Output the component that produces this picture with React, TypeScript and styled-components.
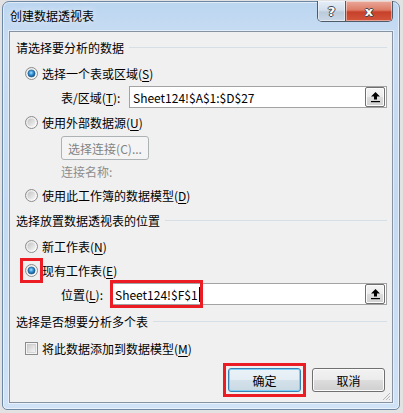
import React, { useId } from "react";
import styled, { createGlobalStyle } from "styled-components";

const Global = createGlobalStyle`
  html, body { margin: 0; padding: 0; }
  body {
    width: 403px; height: 413px; overflow: hidden;
    background: #e2e2e2;
    font-family: "Noto Sans CJK SC", "Microsoft YaHei", sans-serif;
    font-size: 12px; color: #000;
  }
`;

const Page = styled.div`
  padding: 1px 0 0 2px;
`;

const Window = styled.div`
  position: relative;
  width: 398px;
  height: 409px;
  box-sizing: border-box;
  border: 1px solid #6d88a5;
  border-radius: 7px 7px 5px 5px;
  background: linear-gradient(180deg, #bcd6f0 0%, #c9ddf3 10%, #c3daf2 50%, #cfe2f6 100%);
  box-shadow: inset 0 0 0 1px rgba(255, 255, 255, 0.55);
  display: flex;
  flex-direction: column;
  padding: 0 6px 6px 6px;
`;

const TitleBar = styled.div`
  height: 29px;
  display: flex;
  align-items: flex-start;
  justify-content: space-between;
`;

const Title = styled.div`
  margin: 6px 0 0 1px;
  line-height: 16px;
  font-size: 12px;
  color: #000;
  text-shadow: 0 0 6px rgba(255, 255, 255, 0.9);
`;

const Caption = styled.div`
  margin-top: -1px;
  display: flex;
  height: 20px;
  border: 1px solid #4e5b69;
  border-top: none;
  border-radius: 0 0 5px 5px;
  overflow: hidden;
`;

const CapButton = styled.div<{ $close?: boolean }>`
  width: ${(p) => (p.$close ? "46px" : "27px")};
  height: 20px;
  display: flex;
  align-items: center;
  justify-content: center;
  font-family: "DejaVu Sans", sans-serif;
  font-weight: bold;
  font-size: ${(p) => (p.$close ? "13px" : "13px")};
  color: #fff;
  text-shadow: -1px 0 #3c4653, 1px 0 #3c4653, 0 -1px #3c4653, 0 1px #3c4653;
  border-right: ${(p) => (p.$close ? "none" : "1px solid #4e5b69")};
  background: ${(p) =>
    p.$close
      ? "linear-gradient(180deg, #e9a99b 0%, #dd7c66 45%, #c7402a 55%, #d3563c 100%)"
      : "linear-gradient(180deg, #e5eef7 0%, #d3dfec 45%, #bccbdc 55%, #c9d7e6 100%)"};
  box-shadow: inset 0 0 0 1px rgba(255, 255, 255, 0.45);
`;

const Client = styled.div`
  position: relative;
  flex: 1;
  box-sizing: border-box;
  border: 1px solid #8593a2;
  background: #f0f0f0;
  box-shadow: 0 0 0 1px rgba(255, 255, 255, 0.5);
  display: flex;
  flex-direction: column;
  padding: 0 5px 0 6px;
`;

const SectionHeader = styled.div<{ $mt: number }>`
  margin-top: ${(p) => p.$mt}px;
  height: 18px;
  display: flex;
  align-items: center;
  gap: 5px;
  white-space: nowrap;
  &::after {
    content: "";
    flex: 1;
    height: 1px;
    background: #d5dfe5;
  }
`;

const OptionRow = styled.div<{ $mt: number; $indent?: number }>`
  margin-top: ${(p) => p.$mt}px;
  margin-left: ${(p) => p.$indent ?? 9}px;
  height: 18px;
  display: flex;
  align-items: center;
  gap: 4px;
  white-space: nowrap;
`;

const Key = styled.span`
  text-decoration: underline;
  text-underline-offset: 2px;
`;

const MarkWrap = styled.span`
  position: relative;
  display: inline-flex;
  width: 13px;
  height: 13px;
`;

const Highlight = styled.span<{ $l: number; $t: number; $r: number; $b: number }>`
  position: absolute;
  left: ${(p) => p.$l}px;
  top: ${(p) => p.$t}px;
  right: ${(p) => p.$r}px;
  bottom: ${(p) => p.$b}px;
  border: 3px solid #ec1c24;
  pointer-events: none;
`;

const FieldRow = styled.div<{ $mt: number }>`
  margin-top: ${(p) => p.$mt}px;
  margin-left: 45px;
  height: 22px;
  display: flex;
  align-items: center;
`;

const FieldLabel = styled.div<{ $w: number }>`
  width: ${(p) => p.$w}px;
  flex: none;
  white-space: nowrap;
`;

const Field = styled.div`
  position: relative;
  flex: 1;
  height: 22px;
  box-sizing: border-box;
  border: 1px solid #a3a3a3;
  background: #fff;
  display: flex;
  align-items: center;
  padding: 0 1px 0 3px;
  white-space: nowrap;
`;

const FieldText = styled.span`
  flex: 1;
  display: flex;
  align-items: center;
`;

const Caret = styled.span`
  display: inline-block;
  width: 1px;
  height: 15px;
  background: #000;
  margin-left: 1px;
`;

const PickButton = styled.div`
  width: 20px;
  height: 20px;
  box-sizing: border-box;
  border: 1px solid #707070;
  border-radius: 2px;
  background: linear-gradient(180deg, #f4f4f4 0%, #ececec 50%, #dcdcdc 51%, #d2d2d2 100%);
  box-shadow: inset 0 0 0 1px #fcfcfc;
  display: flex;
  align-items: center;
  justify-content: center;
`;

const ConnectButton = styled.div<{ $mt: number }>`
  margin-top: ${(p) => p.$mt}px;
  margin-left: 45px;
  width: 88px;
  height: 24px;
  box-sizing: border-box;
  border: 1px solid #adb2b5;
  border-radius: 3px;
  background: #f4f4f4;
  color: #838383;
  display: flex;
  align-items: center;
  justify-content: center;
  white-space: nowrap;
`;

const MutedLabel = styled.div<{ $mt: number }>`
  margin-top: ${(p) => p.$mt}px;
  margin-left: 45px;
  height: 18px;
  line-height: 18px;
  color: #8d8d8d;
`;

const ButtonBar = styled.div<{ $mt: number }>`
  margin-top: ${(p) => p.$mt}px;
  margin-right: 2px;
  display: flex;
  justify-content: flex-end;
  gap: 11px;
`;

const ButtonWrap = styled.div`
  position: relative;
  display: flex;
`;

const DialogButton = styled.div<{ $default?: boolean }>`
  width: 73px;
  height: 24px;
  box-sizing: border-box;
  border: 1px solid ${(p) => (p.$default ? "#3c7fb1" : "#707070")};
  border-radius: 3px;
  background: ${(p) =>
    p.$default
      ? "linear-gradient(180deg, #eaf2f7 0%, #e3edf3 50%, #d3e1ea 51%, #c9d9e3 100%)"
      : "linear-gradient(180deg, #f2f2f2 0%, #ebebeb 50%, #dddddd 51%, #cfcfcf 100%)"};
  box-shadow: inset 0 0 0 1px ${(p) => (p.$default ? "#7fd0f6" : "#fbfbfb")};
  display: flex;
  align-items: center;
  justify-content: center;
`;

const Grip = styled.svg`
  position: absolute;
  right: 1px;
  bottom: 1px;
`;

function Radio({ on }: { on?: boolean }) {
  const id = useId().replace(/:/g, "");
  return (
    <svg width="13" height="13" viewBox="0 0 13 13">
      <defs>
        <linearGradient id={`o${id}`} x1="0" y1="0" x2="1" y2="1">
          <stop offset="0" stopColor="#e6e6e6" />
          <stop offset="1" stopColor="#ffffff" />
        </linearGradient>
        <linearGradient id={`i${id}`} x1="0" y1="0" x2="1" y2="1">
          <stop offset="0" stopColor="#c3c3c3" />
          <stop offset="1" stopColor="#f7f7f7" />
        </linearGradient>
        <radialGradient id={`b${id}`} cx="0.45" cy="0.4" r="0.6">
          <stop offset="0" stopColor="#a9e0ff" />
          <stop offset="0.45" stopColor="#3b97d6" />
          <stop offset="1" stopColor="#0d4e86" />
        </radialGradient>
      </defs>
      <circle cx="6.5" cy="6.5" r="6" fill={`url(#o${id})`} stroke="#8b8b8b" strokeWidth="1" />
      {on ? (
        <circle cx="6.5" cy="6.5" r="3.6" fill={`url(#b${id})`} stroke="#1b5a91" strokeWidth="0.6" />
      ) : (
        <circle cx="6.5" cy="6.5" r="4" fill={`url(#i${id})`} />
      )}
    </svg>
  );
}

function Check() {
  const id = useId().replace(/:/g, "");
  return (
    <svg width="13" height="13" viewBox="0 0 13 13">
      <defs>
        <linearGradient id={`c${id}`} x1="0" y1="0" x2="1" y2="1">
          <stop offset="0" stopColor="#cbcbcb" />
          <stop offset="1" stopColor="#f7f7f7" />
        </linearGradient>
      </defs>
      <rect x="0.5" y="0.5" width="12" height="12" fill="#f4f4f4" stroke="#8b8b8b" />
      <rect x="2.5" y="2.5" width="8" height="8" fill={`url(#c${id})`} stroke="#b9b9b9" strokeWidth="0.5" />
    </svg>
  );
}

function PickIcon() {
  return (
    <svg width="11" height="12" viewBox="0 0 11 12">
      <path d="M5.5 1 L10 5.5 L7 5.5 L7 8.5 L4 8.5 L4 5.5 L1 5.5 Z" fill="#000" />
      <rect x="1" y="10" width="9" height="1.2" fill="#000" />
    </svg>
  );
}

export default function App() {
  return (
    <Page>
      <Global />
      <Window>
        <TitleBar>
          <Title>创建数据透视表</Title>
          <Caption>
            <CapButton>?</CapButton>
            <CapButton $close>x</CapButton>
          </Caption>
        </TitleBar>
        <Client>
          <SectionHeader $mt={6}>请选择要分析的数据</SectionHeader>
          <OptionRow $mt={8}>
            <MarkWrap>
              <Radio on />
            </MarkWrap>
            <span>
              选择一个表或区域(<Key>S</Key>)
            </span>
          </OptionRow>
          <FieldRow $mt={4}>
            <FieldLabel $w={68}>
              表/区域(<Key>T</Key>):
            </FieldLabel>
            <Field>
              <FieldText>Sheet124!$A$1:$D$27</FieldText>
              <PickButton>
                <PickIcon />
              </PickButton>
            </Field>
          </FieldRow>
          <OptionRow $mt={5}>
            <MarkWrap>
              <Radio />
            </MarkWrap>
            <span>
              使用外部数据源(<Key>U</Key>)
            </span>
          </OptionRow>
          <ConnectButton $mt={5}>选择连接(C)...</ConnectButton>
          <MutedLabel $mt={3}>连接名称:</MutedLabel>
          <OptionRow $mt={5}>
            <MarkWrap>
              <Radio />
            </MarkWrap>
            <span>
              使用此工作簿的数据模型(<Key>D</Key>)
            </span>
          </OptionRow>
          <SectionHeader $mt={7}>选择放置数据透视表的位置</SectionHeader>
          <OptionRow $mt={8}>
            <MarkWrap>
              <Radio />
            </MarkWrap>
            <span>
              新工作表(<Key>N</Key>)
            </span>
          </OptionRow>
          <OptionRow $mt={6}>
            <MarkWrap>
              <Radio on />
              <Highlight $l={-5} $t={-6} $r={-5} $b={-6} />
            </MarkWrap>
            <span>
              现有工作表(<Key>E</Key>)
            </span>
          </OptionRow>
          <FieldRow $mt={4}>
            <FieldLabel $w={50}>
              位置(<Key>L</Key>):
            </FieldLabel>
            <Field>
              <Highlight $l={-2} $t={-4} $r={183} $b={-4} />
              <FieldText>
                Sheet124!$F$1
                <Caret />
              </FieldText>
              <PickButton>
                <PickIcon />
              </PickButton>
            </Field>
          </FieldRow>
          <SectionHeader $mt={7}>选择是否想要分析多个表</SectionHeader>
          <OptionRow $mt={9}>
            <MarkWrap>
              <Check />
            </MarkWrap>
            <span>
              将此数据添加到数据模型(<Key>M</Key>)
            </span>
          </OptionRow>
          <ButtonBar $mt={11}>
            <ButtonWrap>
              <DialogButton $default>确定</DialogButton>
              <Highlight $l={-5} $t={-5} $r={-5} $b={-5} />
            </ButtonWrap>
            <ButtonWrap>
              <DialogButton>取消</DialogButton>
            </ButtonWrap>
          </ButtonBar>
          <Grip width="10" height="10" viewBox="0 0 10 10">
            <path d="M9 2 L2 9 M9 5 L5 9 M9 8 L8 9" stroke="#b8b8b8" strokeWidth="1" />
          </Grip>
        </Client>
      </Window>
    </Page>
  );
}
